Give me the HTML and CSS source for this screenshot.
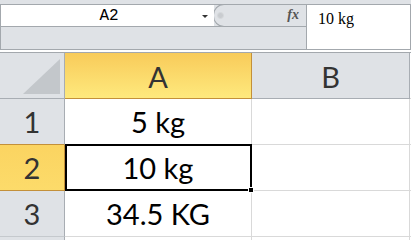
FILE: index.html
```html
<!DOCTYPE html>
<html>
<head>
<meta charset="utf-8">
<link rel="stylesheet" href="styles.css">
</head>
<body>
<div class="app">
  <div class="top-strip"></div>
  <div class="formula-bar">
    <div class="fb-left">
      <div class="fb-row1">
        <div class="namebox">
          <span class="name">A2</span>
          <span class="arrow"></span>
        </div>
        <div class="fb-tools">
          <span class="dot"></span>
          <span class="fx">fx</span>
        </div>
      </div>
      <div class="fb-row2"></div>
    </div>
    <div class="fb-input">10 kg</div>
  </div>
  <div class="gap-strip"></div>
  <div class="sheet">
    <div class="corner">
      <svg class="tri" width="37" height="35" viewBox="0 0 37 35"><polygon points="0,35 37,35 37,0" fill="#c3c7cb"/></svg>
    </div>
    <div class="colhead sel">A</div>
    <div class="colhead">B</div>
    <div class="edge"></div>

    <div class="rowhead sel-above">1</div>
    <div class="cell">5 kg</div>
    <div class="cell"></div>
    <div class="edge"></div>

    <div class="rowhead sel">2</div>
    <div class="cell active">10 kg<span class="selbox"><span class="handle"></span></span></div>
    <div class="cell"></div>
    <div class="edge"></div>

    <div class="rowhead">3</div>
    <div class="cell">34.5 KG</div>
    <div class="cell"></div>
    <div class="edge"></div>

    <div class="rowhead short"></div>
    <div class="cell short"></div>
    <div class="cell short"></div>
    <div class="edge short"></div>
  </div>
</div>
</body>
</html>
```

FILE: styles.css
```css
* { box-sizing: border-box; }
html, body { margin: 0; padding: 0; }
body { width: 411px; height: 240px; overflow: hidden; background: #dfe2e6; }

.app { width: 411px; height: 240px; overflow: hidden; }

.top-strip {
  height: 5px;
  background: #dfe2e6;
  border-bottom: 1px solid #a3a8ad;
}

.formula-bar {
  display: flex;
  height: 45px;
  border-bottom: 1px solid #a3a8ad;
}

.fb-left {
  width: 307px;
  display: flex;
  flex-direction: column;
  border-left: 1px solid #a3a8ad;
  border-right: 1px solid #a3a8ad;
}

.fb-row1 {
  height: 22px;
  display: flex;
  border-bottom: 1px solid #a3a8ad;
}

.namebox {
  width: 213px;
  background: #fff;
  position: relative;
  display: flex;
  align-items: center;
  justify-content: center;
}

.name {
  font-family: "Liberation Mono", monospace;
  font-size: 16px;
  color: #000;
  margin-top: 1px;
  padding-left: 3px;
}

.arrow {
  position: absolute;
  left: 201px;
  top: 10px;
  width: 0;
  height: 0;
  border-left: 3px solid transparent;
  border-right: 3px solid transparent;
  border-top: 3px solid #333;
}

.fb-tools {
  flex: 1;
  margin: -1px 0 -1px -1px;
  background: #dfe2e6;
  border: 1px solid #a3a8ad;
  border-right: none;
  border-radius: 11px 0 0 11px;
  display: flex;
  align-items: center;
  padding-left: 3px;
  padding-right: 7px;
}

.dot {
  width: 7px;
  height: 7px;
  border-radius: 50%;
  background: #c9ccd0;
  border: 1px solid #d6d9dc;
}

.fx {
  margin-left: auto;
  font-family: "Liberation Serif", serif;
  font-style: italic;
  font-weight: bold;
  font-size: 14px;
  color: #555;
  margin-top: -1px;
}

.fb-row2 {
  flex: 1;
  background: #dfe2e6;
}

.fb-input {
  flex: 1;
  background: #fff;
  border-right: 1px solid #a3a8ad;
  font-family: "Liberation Serif", serif;
  font-size: 16px;
  line-height: 18px;
  padding: 5px 0 0 11px;
  color: #000;
}

.gap-strip {
  height: 3px;
  background: #fff;
  border-bottom: 1px solid #a3a8ad;
}

.sheet {
  display: grid;
  grid-template-columns: 65px 187px 158px 1fr;
  grid-template-rows: 46px 46px 46px 46px 10px;
  background: #fff;
  font-family: Lato, "Open Sans", sans-serif;
  font-size: 29px;
}

.sheet > div {
  border-right: 1px solid #d9d9d9;
  border-bottom: 1px solid #d9d9d9;
  line-height: 45px;
  text-align: center;
}

.corner {
  background: #dfe2e6;
  position: relative;
  border-right-color: #a8adb3 !important;
  border-bottom-color: #a8adb3 !important;
}

.tri {
  position: absolute;
  right: 4px;
  bottom: 4px;
}

.colhead {
  background: #dfe2e6;
  color: #333;
  border-right-color: #a8adb3 !important;
  border-bottom-color: #a8adb3 !important;
  padding-top: 1px;
}

.colhead.sel {
  background: linear-gradient(#f8cb5a, #fee97d);
  border-right-color: #c3903a !important;
  border-bottom-color: #c3903a !important;
}

.rowhead {
  background: #dfe2e6;
  color: #333;
  border-right-color: #a8adb3 !important;
  border-bottom-color: #c5c9cd !important;
}

.rowhead.sel-above {
  border-bottom-color: #c3903a !important;
}

.rowhead.sel {
  background: linear-gradient(#fbd461, #fcdb6a);
  border-right-color: #c3903a !important;
  border-bottom-color: #c3903a !important;
}

.cell { color: #000; }

.cell.active { position: relative; }

.selbox {
  position: absolute;
  left: 0;
  top: -1px;
  right: -1px;
  bottom: -1px;
  border: 2px solid #000;
}

.handle {
  position: absolute;
  right: -4px;
  bottom: -4px;
  width: 6px;
  height: 6px;
  background: #000;
  border: 1px solid #fff;
}

.edge {
  background: #fff;
  border-right: none !important;
}
```
